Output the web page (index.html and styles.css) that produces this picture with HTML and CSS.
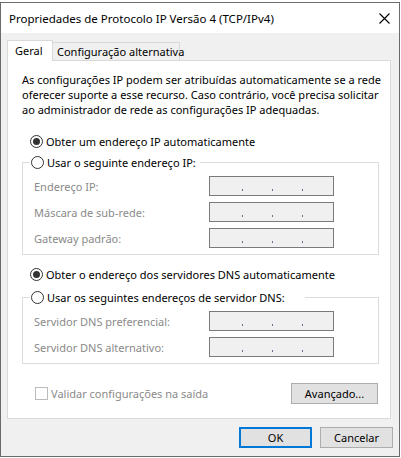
FILE: index.html
```html
<!DOCTYPE html>
<html lang="pt-BR">
<head>
<meta charset="utf-8">
<title>Propriedades de Protocolo IP Versão 4 (TCP/IPv4)</title>
<link rel="stylesheet" href="styles.css">
</head>
<body>
<div class="window">
  <div class="titlebar">
    <span class="title">Propriedades de Protocolo IP Versão 4 (TCP/IPv4)</span>
    <svg class="close" width="11" height="11" viewBox="0 0 11 11"><path d="M0.5 0.5 L10.5 10.5 M10.5 0.5 L0.5 10.5" stroke="#000" stroke-width="1.1" fill="none"/></svg>
  </div>
  <div class="body">
    <div class="tabs">
      <div class="tab active">Geral</div>
      <div class="tab">Configuração alternativa</div>
    </div>
    <div class="panel">
      <p class="intro">As configurações IP podem ser atribuídas automaticamente se a rede<br>oferecer suporte a esse recurso. Caso contrário, você precisa solicitar<br>ao administrador de rede as configurações IP adequadas.</p>

      <div class="radio first"><span class="rb on"></span><span>Obter um endereço IP automaticamente</span></div>
      <fieldset class="group">
        <legend><span class="radio-in"><span class="rb"></span><span>Usar o seguinte endereço IP:</span></span></legend>
        <div class="row"><span class="lbl">Endereço IP:</span><div class="ip"><i></i><i></i><i></i></div></div>
        <div class="row"><span class="lbl">Máscara de sub-rede:</span><div class="ip"><i></i><i></i><i></i></div></div>
        <div class="row"><span class="lbl">Gateway padrão:</span><div class="ip"><i></i><i></i><i></i></div></div>
      </fieldset>

      <div class="radio third"><span class="rb on"></span><span>Obter o endereço dos servidores DNS automaticamente</span></div>
      <fieldset class="group dns">
        <legend><span class="radio-in"><span class="rb"></span><span>Usar os seguintes endereços de servidor DNS:</span></span></legend>
        <div class="row"><span class="lbl">Servidor DNS preferencial:</span><div class="ip"><i></i><i></i><i></i></div></div>
        <div class="row"><span class="lbl">Servidor DNS alternativo:</span><div class="ip"><i></i><i></i><i></i></div></div>
      </fieldset>

      <div class="footer-row">
        <div class="check"><span class="box"></span><span>Validar configurações na saída</span></div>
        <button class="btn adv">Avançado...</button>
      </div>
    </div>
    <div class="actions">
      <button class="btn ok">OK</button>
      <button class="btn">Cancelar</button>
    </div>
  </div>
</div>
</body>
</html>
```
FILE: styles.css
```css
* { box-sizing: border-box; }

body {
  margin: 0;
  background: #ffffff;
  font-family: "Noto Sans", "Liberation Sans", sans-serif;
  font-size: 11px;
  color: #000;
}

.window {
  margin-top: 2px;
  width: 400px;
  height: 455px;
  border: 1px solid #6b6b6b;
  background: #f0f0f0;
  display: flex;
  flex-direction: column;
}

.titlebar {
  height: 30px;
  background: #fff;
  display: flex;
  align-items: center;
  justify-content: space-between;
  padding: 0 9px 0 8px;
  font-size: 11.5px;
}

.close { display: block; }

.body {
  padding: 7px 8px 0 6px;
}

.tabs {
  display: flex;
  align-items: flex-end;
  height: 20px;
}

.tab {
  height: 18px;
  width: 127px;
  border: 1px solid #d9d9d9;
  border-bottom: none;
  border-left: none;
  padding-left: 4px;
  background: #f0f0f0;
  display: flex;
  align-items: center;
  white-space: nowrap;
}

.tab.active {
  height: 21px;
  width: 46px;
  border-left: 1px solid #d9d9d9;
  background: #fff;
  margin-bottom: -1px;
  padding-left: 7px;
  padding-bottom: 1px;
  position: relative;
  z-index: 1;
}

.panel {
  width: 384px;
  height: 359px;
  background: #fff;
  border: 1px solid #d9d9d9;
  padding: 0 10px 0 14px;
}

.intro {
  margin: 11px 0 0;
  line-height: 15px;
  white-space: nowrap;
}

.radio, .radio-in {
  display: flex;
  align-items: center;
  height: 17px;
  white-space: nowrap;
}

.radio { margin-left: 8px; }
.radio.first { margin-top: 16px; }
.radio.third { margin-top: 11px; }

.rb {
  width: 13px;
  height: 13px;
  border: 1px solid #333;
  border-radius: 50%;
  background: #fff;
  display: flex;
  align-items: center;
  justify-content: center;
  margin-right: 3px;
  flex: none;
}

.rb.on::after {
  content: "";
  width: 7px;
  height: 7px;
  border-radius: 50%;
  background: #333;
}

.group {
  margin: 4px 0 0 0;
  width: 357px;
  border: 1px solid #dcdcdc;
  padding: 5px 0 6px 11px;
}

.group.dns { margin-top: 6px; }

.group legend {
  padding: 0 4px 0 1px;
  margin-left: -4px;
}

.group.dns legend { padding-right: 20px; }

.row {
  display: flex;
  align-items: center;
  height: 20px;
  margin-top: 6px;
}

.row:first-of-type { margin-top: 0; }

.lbl {
  width: 175px;
  color: #8a8a8a;
  white-space: nowrap;
}

.ip {
  width: 125px;
  height: 20px;
  border: 1px solid #7a7a7a;
  background: #f0f0f0;
  display: flex;
  align-items: flex-start;
  padding: 12px 0 0 32px;
  gap: 29px;
}

.ip i {
  display: block;
  width: 1px;
  height: 2px;
  background: #6a6a8a;
}

.footer-row {
  margin-top: 19px;
  height: 21px;
  display: flex;
  align-items: center;
  justify-content: space-between;
  padding-right: 2px;
}

.check {
  display: flex;
  align-items: center;
  margin-left: 13px;
  color: #8a8a8a;
  white-space: nowrap;
}

.check .box {
  width: 13px;
  height: 13px;
  border: 1px solid #bcbcbc;
  background: #fff;
  margin-right: 3px;
}

.btn {
  height: 21px;
  width: 73px;
  border: 1px solid #adadad;
  background: #e1e1e1;
  font-family: inherit;
  font-size: 11px;
  color: #000;
  padding: 0;
}

.btn.adv { width: 87px; }

.btn.ok { border: 2px solid #0078d7; }

.actions {
  display: flex;
  justify-content: flex-end;
  gap: 8px;
  margin-top: 8px;
  margin-right: -2px;
}
```
